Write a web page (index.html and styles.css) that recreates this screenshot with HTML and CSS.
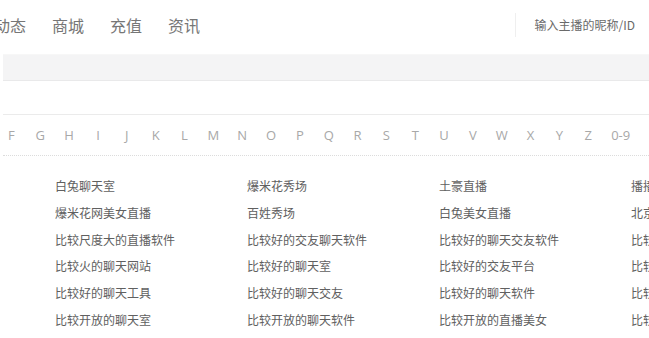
FILE: index.html
```html
<!DOCTYPE html>
<html lang="zh-CN">
<head>
<meta charset="utf-8">
<title>主播索引</title>
<link rel="stylesheet" href="styles.css">
</head>
<body>
<div class="page">
  <header class="nav">
    <ul class="nav-links">
      <li>动态</li>
      <li>商城</li>
      <li>充值</li>
      <li>资讯</li>
    </ul>
    <div class="search">输入主播的昵称/ID</div>
  </header>
  <div class="band"></div>
  <div class="blank"></div>
  <ul class="letters">
    <li>F</li><li>G</li><li>H</li><li>I</li><li>J</li><li>K</li><li>L</li><li>M</li><li>N</li><li>O</li><li>P</li><li>Q</li><li>R</li><li>S</li><li>T</li><li>U</li><li>V</li><li>W</li><li>X</li><li>Y</li><li>Z</li><li class="num">0-9</li>
  </ul>
  <ul class="items">
    <li>白兔聊天室</li><li>爆米花秀场</li><li>土豪直播</li><li>播播直播</li>
    <li>爆米花网美女直播</li><li>百姓秀场</li><li>白兔美女直播</li><li>北京聊天室</li>
    <li>比较尺度大的直播软件</li><li>比较好的交友聊天软件</li><li>比较好的聊天交友软件</li><li>比较好的直播软件</li>
    <li>比较火的聊天网站</li><li>比较好的聊天室</li><li>比较好的交友平台</li><li>比较火的直播软件</li>
    <li>比较好的聊天工具</li><li>比较好的聊天交友</li><li>比较好的聊天软件</li><li>比较好的交友软件</li>
    <li>比较开放的聊天室</li><li>比较开放的聊天软件</li><li>比较开放的直播美女</li><li>比较开放的聊天平台</li>
  </ul>
</div>
</body>
</html>
```

FILE: styles.css
```css
* { box-sizing: border-box; }
html, body { margin: 0; padding: 0; background: #fff; }
body {
  width: 649px;
  height: 338px;
  overflow: hidden;
  font-family: "Noto Sans CJK SC", "Noto Sans", sans-serif;
}
ul { list-style: none; margin: 0; padding: 0; }
.page { width: 649px; overflow: hidden; }

.nav {
  height: 50px;
  display: flex;
  align-items: center;
}
.nav-links {
  display: flex;
  gap: 26px;
  margin-left: -6px;
  font-size: 16px;
  color: #767676;
}
.search {
  margin-left: auto;
  margin-right: 14px;
  height: 24px;
  line-height: 24px;
  border-left: 1px solid #efefef;
  padding-left: 19px;
  font-size: 12px;
  color: #6a6a6a;
}

.band {
  margin: 4px 0 0 3px;
  height: 27px;
  background: #f4f4f5;
  border-top: 1px solid #f7f7f7;
  border-bottom: 1px solid #e9e9ea;
}
.blank {
  margin-left: 3px;
  height: 34px;
  border-bottom: 1px solid #ebebeb;
}

.letters {
  display: flex;
  height: 41px;
  align-items: center;
  margin-left: 3px;
  padding-left: 0;
  border-bottom: 1px dotted #dcdcdc;
  font-family: "Open Sans", "Noto Sans", sans-serif;
  font-size: 13px;
  color: #a8a8a8;
}
.letters li {
  width: 28.85px;
  flex: none;
  text-align: center;
}
.letters li:first-child { margin-left: -6px; }
.letters li.num { width: 36px; }

.items {
  display: grid;
  grid-template-columns: repeat(4, 192px);
  grid-auto-rows: 26.8px;
  padding: 17px 0 0 55px;
  font-size: 12px;
  color: #606060;
  line-height: 26.8px;
  white-space: nowrap;
}
.items li { overflow: hidden; }
```
